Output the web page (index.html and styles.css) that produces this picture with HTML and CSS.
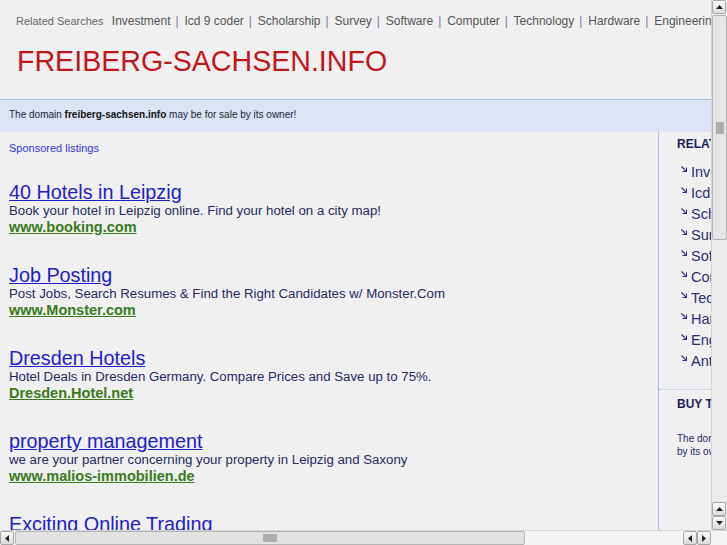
FILE: index.html
```html
<!DOCTYPE html>
<html>
<head>
<meta charset="utf-8">
<link rel="stylesheet" href="styles.css">
</head>
<body>
<div class="page">
  <div class="header">
    <div class="related">
      <span class="rel-label">Related Searches</span>
      <a href="#">Investment</a><span class="sep">|</span>
      <a href="#">Icd 9 coder</a><span class="sep">|</span>
      <a href="#">Scholarship</a><span class="sep">|</span>
      <a href="#">Survey</a><span class="sep">|</span>
      <a href="#">Software</a><span class="sep">|</span>
      <a href="#">Computer</a><span class="sep">|</span>
      <a href="#">Technology</a><span class="sep">|</span>
      <a href="#">Hardware</a><span class="sep">|</span>
      <a href="#">Engineering</a><span class="sep">|</span>
      <a href="#">Antivirus</a>
    </div>
    <h1 class="title">FREIBERG-SACHSEN.INFO</h1>
  </div>
  <div class="salebar">The domain <b>freiberg-sachsen.info</b> may be for sale by its owner!</div>
  <div class="main">
    <div class="content">
      <div class="sponsored">Sponsored listings</div>
      <div class="ad">
        <a class="ad-title" href="#">40 Hotels in Leipzig</a>
        <div class="ad-desc">Book your hotel in Leipzig online. Find your hotel on a city map!</div>
        <a class="ad-url" href="#">www.booking.com</a>
      </div>
      <div class="ad">
        <a class="ad-title" href="#">Job Posting</a>
        <div class="ad-desc">Post Jobs, Search Resumes &amp; Find the Right Candidates w/ Monster.Com</div>
        <a class="ad-url" href="#">www.Monster.com</a>
      </div>
      <div class="ad">
        <a class="ad-title" href="#">Dresden Hotels</a>
        <div class="ad-desc">Hotel Deals in Dresden Germany. Compare Prices and Save up to 75%.</div>
        <a class="ad-url" href="#">Dresden.Hotel.net</a>
      </div>
      <div class="ad">
        <a class="ad-title" href="#">property management</a>
        <div class="ad-desc">we are your partner concerning your property in Leipzig and Saxony</div>
        <a class="ad-url" href="#">www.malios-immobilien.de</a>
      </div>
      <div class="ad">
        <a class="ad-title" href="#">Exciting Online Trading</a>
        <div class="ad-desc">Trade Forex, Indices &amp; Commodities online.</div>
        <a class="ad-url" href="#">www.example-trading.com</a>
      </div>
    </div>
    <div class="sidebar">
      <div class="side-box">
        <div class="side-head">RELATED SEARCHES</div>
        <ul class="side-list">
          <li><svg class="arr" width="6" height="6" viewBox="0 0 6 6"><path d="M0.5 0.5L5 5M5.5 1.5V5.5H1.5" fill="none" stroke="#2a3080" stroke-width="1.2"/></svg><a href="#">Investment</a></li>
          <li><svg class="arr" width="6" height="6" viewBox="0 0 6 6"><path d="M0.5 0.5L5 5M5.5 1.5V5.5H1.5" fill="none" stroke="#2a3080" stroke-width="1.2"/></svg><a href="#">Icd 9 coder</a></li>
          <li><svg class="arr" width="6" height="6" viewBox="0 0 6 6"><path d="M0.5 0.5L5 5M5.5 1.5V5.5H1.5" fill="none" stroke="#2a3080" stroke-width="1.2"/></svg><a href="#">Scholarship</a></li>
          <li><svg class="arr" width="6" height="6" viewBox="0 0 6 6"><path d="M0.5 0.5L5 5M5.5 1.5V5.5H1.5" fill="none" stroke="#2a3080" stroke-width="1.2"/></svg><a href="#">Survey</a></li>
          <li><svg class="arr" width="6" height="6" viewBox="0 0 6 6"><path d="M0.5 0.5L5 5M5.5 1.5V5.5H1.5" fill="none" stroke="#2a3080" stroke-width="1.2"/></svg><a href="#">Software</a></li>
          <li><svg class="arr" width="6" height="6" viewBox="0 0 6 6"><path d="M0.5 0.5L5 5M5.5 1.5V5.5H1.5" fill="none" stroke="#2a3080" stroke-width="1.2"/></svg><a href="#">Computer</a></li>
          <li><svg class="arr" width="6" height="6" viewBox="0 0 6 6"><path d="M0.5 0.5L5 5M5.5 1.5V5.5H1.5" fill="none" stroke="#2a3080" stroke-width="1.2"/></svg><a href="#">Technology</a></li>
          <li><svg class="arr" width="6" height="6" viewBox="0 0 6 6"><path d="M0.5 0.5L5 5M5.5 1.5V5.5H1.5" fill="none" stroke="#2a3080" stroke-width="1.2"/></svg><a href="#">Hardware</a></li>
          <li><svg class="arr" width="6" height="6" viewBox="0 0 6 6"><path d="M0.5 0.5L5 5M5.5 1.5V5.5H1.5" fill="none" stroke="#2a3080" stroke-width="1.2"/></svg><a href="#">Engineering</a></li>
          <li><svg class="arr" width="6" height="6" viewBox="0 0 6 6"><path d="M0.5 0.5L5 5M5.5 1.5V5.5H1.5" fill="none" stroke="#2a3080" stroke-width="1.2"/></svg><a href="#">Antivirus</a></li>
        </ul>
      </div>
      <div class="side-box buy">
        <div class="side-head">BUY THIS DOMAIN</div>
        <p class="buy-text">The domain freiberg-sachsen.info may be for sale by its owner!</p>
      </div>
    </div>
  </div>
</div>

<div class="vscroll">
  <div class="sbtn"><svg width="9" height="6" viewBox="0 0 9 6"><path d="M1 5h7L4.5 1z" fill="#222"/></svg></div>
  <div class="vthumb"><div class="grip-v"></div></div>
  <div class="vtrack"></div>
  <div class="sbtn"><svg width="9" height="6" viewBox="0 0 9 6"><path d="M1 5h7L4.5 1z" fill="#222"/></svg></div>
  <div class="sbtn"><svg width="9" height="6" viewBox="0 0 9 6"><path d="M1 1h7L4.5 5z" fill="#222"/></svg></div>
</div>
<div class="hscroll">
  <div class="hbtn"><svg width="6" height="9" viewBox="0 0 6 9"><path d="M5 1v7L1 4.5z" fill="#222"/></svg></div>
  <div class="hthumb"><div class="grip-h"></div></div>
  <div class="htrack"></div>
  <div class="hbtn"><svg width="6" height="9" viewBox="0 0 6 9"><path d="M5 1v7L1 4.5z" fill="#222"/></svg></div>
  <div class="hbtn"><svg width="6" height="9" viewBox="0 0 6 9"><path d="M1 1v7L5 4.5z" fill="#222"/></svg></div>
  <div class="corner"></div>
</div>
</body>
</html>
```

FILE: styles.css
```css
html, body {
  margin: 0;
  padding: 0;
  overflow: hidden;
  background: #f0f0f0;
  font-family: "Liberation Sans", Arial, sans-serif;
}
a { text-decoration: none; }

.page {
  width: 900px;
  height: 545px;
}

.header {
  border-bottom: 1px solid #a9bde6;
  padding-left: 16px;
  box-sizing: border-box;
  height: 100px;
}
.related {
  padding-top: 14px;
  font-size: 12px;
  line-height: 14px;
  color: #555;
  white-space: nowrap;
}
.rel-label {
  font-size: 11px;
  color: #666;
  margin-right: 5px;
}
.related a { color: #555; }
.related .sep {
  color: #8a6aa8;
  margin: 0 2.5px 0 5px;
}
.title {
  margin: 17px 0 0 1px;
  font-weight: normal;
  font-size: 28.6px;
  line-height: 32px;
  color: #c0161c;
}

.salebar {
  height: 32px;
  line-height: 30px;
  background: #dce4f4;
  font-size: 10px;
  color: #1a1f40;
  padding-left: 9px;
  box-sizing: border-box;
}
.salebar b { color: #111; }

.main {
  display: flex;
  height: 398px;
}
.content {
  width: 649px;
  padding-left: 9px;
  border-right: 1px solid #a9bde6;
  overflow: hidden;
}
.sponsored {
  margin-top: 10px;
  font-size: 11px;
  line-height: 12px;
  color: #3232d8;
  margin-bottom: 29px;
}
.ad {
  display: flex;
  flex-direction: column;
  align-items: flex-start;
  margin-bottom: 30px;
}
.ad-title {
  font-size: 19.8px;
  line-height: 19px;
  color: #2020c8;
  text-decoration: underline;
}
.ad-desc {
  font-size: 13.25px;
  line-height: 17px;
  color: #252a60;
  white-space: nowrap;
}
.ad-url {
  font-size: 14.5px;
  line-height: 17px;
  font-weight: bold;
  color: #3a7a1c;
  text-decoration: underline;
}

.sidebar {
  width: 240px;
}
.side-box {
  padding-left: 18px;
  border-bottom: 1px dotted #a9bde6;
  padding-bottom: 18px;
}
.side-head {
  font-size: 12px;
  font-weight: bold;
  color: #1a1f5a;
  padding-top: 5px;
  line-height: 14px;
}
.side-list {
  list-style: none;
  margin: 10px 0 0 0;
  padding: 0 0 0 4px;
}
.side-list li {
  display: flex;
  align-items: center;
  height: 21px;
  font-size: 14.5px;
  color: #2a2f70;
}
.side-list a { color: #2a2f70; }
.arr {
  flex: none;
  margin-right: 4px;
  margin-top: -5px;
}
.buy {
  border-bottom: none;
  padding-top: 0;
}
.buy .side-head { padding-top: 7px; }
.buy-text {
  margin: 21px 0 0 0;
  width: 230px;
  font-size: 10px;
  line-height: 13px;
  color: #252a60;
}

/* fake scrollbars (overlay) */
.vscroll {
  position: fixed;
  top: 0;
  right: 0;
  width: 15px;
  height: 530px;
  display: flex;
  flex-direction: column;
  background: #ececec;
  border-left: 1px solid #d6d6d6;
}
.sbtn, .hbtn {
  width: 14px;
  height: 14px;
  box-sizing: border-box;
  border: 1px solid #a8a8a8;
  border-radius: 2px;
  background: linear-gradient(#fafafa, #dcdcdc);
  display: flex;
  align-items: center;
  justify-content: center;
  flex: none;
}
.vthumb {
  height: 225px;
  margin: 1px 0;
  box-sizing: border-box;
  border: 1px solid #b4b4b4;
  border-radius: 2px;
  background: #e6e6e6;
  display: flex;
  align-items: center;
  justify-content: center;
}
.grip-v {
  width: 8px;
  height: 12px;
  background-image: radial-gradient(#aaa 0.7px, transparent 0.8px);
  background-size: 2px 2px;
}
.vtrack { flex: 1; }

.hscroll {
  position: fixed;
  left: 0;
  bottom: 0;
  width: 727px;
  height: 15px;
  display: flex;
  background: #f4f4f4;
  border-top: 1px solid #d6d6d6;
  box-sizing: border-box;
}
.hthumb {
  width: 510px;
  margin: 0 1px;
  box-sizing: border-box;
  border: 1px solid #b4b4b4;
  border-radius: 2px;
  background: #e2e2e2;
  display: flex;
  align-items: center;
  justify-content: center;
}
.grip-h {
  width: 14px;
  height: 8px;
  background-image: radial-gradient(#aaa 0.7px, transparent 0.8px);
  background-size: 2px 2px;
}
.htrack { flex: 1; }
.corner { width: 16px; flex: none; }
```
